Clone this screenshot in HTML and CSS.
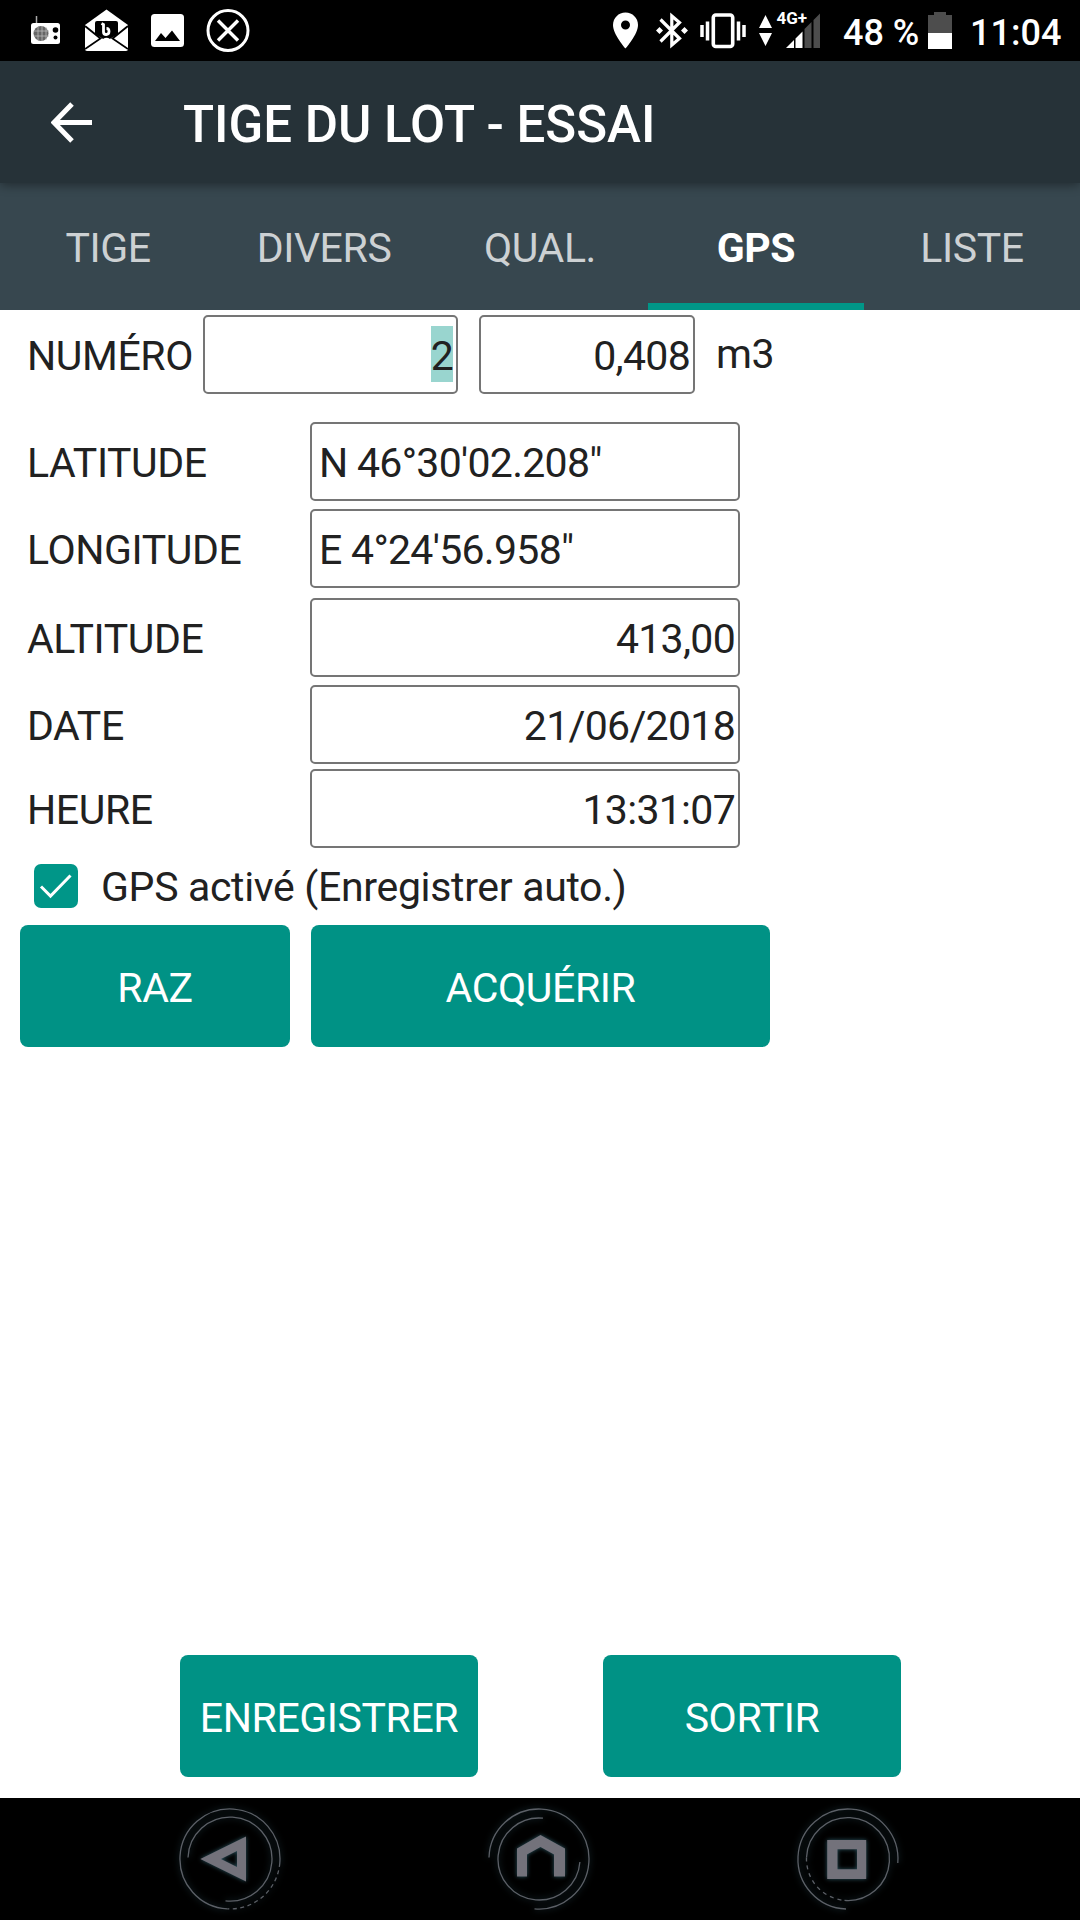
FILE: index.html
```html
<!DOCTYPE html>
<html lang="fr">
<head>
  <meta charset="UTF-8">
  <title>TIGE DU LOT - ESSAI</title>
  <link rel="stylesheet" href="styles.css">
</head>
<body>

  <div class="status">
    <svg class="radio" width="30" height="61" viewBox="0 0 30 61">
      <path d="M5.500 16v8" stroke="#aaa" stroke-width="1.500"/>
      <rect y="23" width="29" height="21" rx="2.500" fill="#fff"/>
      <circle cx="10" cy="33.500" r="7.500" fill="#666"/>
      <path d="M3 31h15M3 36h15M7 27v13M11 26v15M15 27v13" stroke="#bbb" stroke-width="0.8"/>
      <circle cx="24.500" cy="30" r="2.800" fill="#000"/>
      <circle cx="24.500" cy="37.500" r="2" fill="#000"/>
    </svg>
    <svg class="mail" width="43" height="61" viewBox="0 0 43 61">
      <path d="M0 25L21.500 9.500 43 25V49q0 2-2 2H2q-2 0-2-2z" fill="#fff"/>
      <path d="M10 34V23q0-2 2-2h19q2 0 2 2v11L21.500 41z" fill="#000"/>
      <path d="M0 26L15.500 38.500 0 49M43 26L27.500 38.500 43 49" fill="none" stroke="#000" stroke-width="1.800"/>
      <path d="M2 50L18 39q3.500-2.500 7 0L41 50z" fill="#fff"/>
      <path d="M16.500 23.500l2 1v7.500q0 2.500 2.700 2.500t2.800-3-2.500-3" fill="none" stroke="#fff" stroke-width="2.800"/>
    </svg>
    <svg class="image" width="33" height="61" viewBox="0 0 33 61">
      <rect y="14" width="33" height="33" rx="3.500" fill="#fff"/>
      <path d="M4 41l6-8 4.500 5L21 30.500 29 41z" fill="#000"/>
    </svg>
    <svg class="close" width="44" height="61" viewBox="0 0 44 61">
      <g fill="none" stroke="#fff" stroke-width="3">
        <circle cx="22" cy="30.500" r="20"/>
        <path d="M12 20.500l20 20M32 20.500l-20 20" stroke-width="3.400"/>
      </g>
    </svg>

    <svg class="pin" width="25" height="61" viewBox="0 0 25 61">
      <path fill-rule="evenodd" d="M12.500 12.500C5.500 12.500 0 18 0 25c0 9.500 12.500 23.500 12.500 23.500S25 34.500 25 25c0-7-5.500-12.500-12.500-12.500zm0 8a4.500 4.500 0 1 1 0 9 4.500 4.500 0 0 1 0-9z" fill="#fff"/>
    </svg>
    <svg class="bluetooth" width="32" height="61" viewBox="0 0 32 61">
      <path d="M4.500 19.500L23.500 38.500 15.800 45V16l7.700 6.500L4.500 41.500" fill="none" stroke="#fff" stroke-width="3.200"/>
      <path d="M3.500 27l3.500 3.500L3.500 34 0 30.500zM28.500 27l3.500 3.500-3.500 3.500-3.500-3.500z" fill="#fff"/>
    </svg>
    <svg class="vibrate" width="46" height="61" viewBox="0 0 46 61">
      <rect x="13.300" y="15" width="19.400" height="31.500" rx="2.500" fill="none" stroke="#fff" stroke-width="3.600"/>
      <path d="M2 25v12M7.500 21.500v19M38.500 21.500v19M44 25v12" stroke="#fff" stroke-width="3.500"/>
    </svg>
    <svg class="signal" width="62" height="61" viewBox="0 0 62 61">
      <path d="M6.500 15L13 28H0zM0 33h13L6.500 46z" fill="#fff"/>
      <path d="M27 48l8-8v8zM36.500 38.500l7-7V48h-7z" fill="#fff"/>
      <path d="M45.500 29l7-7v26h-7zM54.500 20l6.500-6.500V48h-6.500z" fill="#4d4d4d"/>
      <text x="17.500" y="24" class="network">4G+</text>
    </svg>
    <span class="percent">48 %</span>
    <svg class="battery" width="24" height="61" viewBox="0 0 24 61">
      <path d="M0 33V15h6v-3h12v3h6v18z" fill="#4d4d4d"/>
      <rect y="33" width="24" height="16" fill="#fff"/>
    </svg>
    <span class="clock">11:04</span>
  </div>

  <header>
    <svg width="42" height="42" viewBox="0 0 42 42">
      <path d="M21 3L3 21.500 21 40M3 21.500h38" fill="none" stroke="#fff" stroke-width="5"/>
    </svg>
    <h1>TIGE DU LOT - ESSAI</h1>
  </header>

  <nav class="tabs">
    <a>TIGE</a>
    <a>DIVERS</a>
    <a>QUAL.</a>
    <a class="active">GPS</a>
    <a>LISTE</a>
  </nav>

  <main>
    <div class="row numero">
      <label>NUMÉRO</label>
      <div class="field right"><span class="selected">2</span></div>
      <div class="field right volume">0,408</div>
      <span class="unit">m3</span>
    </div>
    <div class="row latitude">
      <label>LATITUDE</label>
      <div class="field">N 46°30'02.208"</div>
    </div>
    <div class="row longitude">
      <label>LONGITUDE</label>
      <div class="field">E 4°24'56.958"</div>
    </div>
    <div class="row altitude">
      <label>ALTITUDE</label>
      <div class="field right">413,00</div>
    </div>
    <div class="row date">
      <label>DATE</label>
      <div class="field right">21/06/2018</div>
    </div>
    <div class="row heure">
      <label>HEURE</label>
      <div class="field right">13:31:07</div>
    </div>

    <div class="check">
      <svg width="44" height="44" viewBox="0 0 44 44">
        <rect width="44" height="44" rx="7" fill="#009688"/>
        <path d="M7 22.500l9.500 9.500L36.500 11.500" fill="none" stroke="#fff" stroke-width="3"/>
      </svg>
      <span>GPS activé (Enregistrer auto.)</span>
    </div>

    <div class="actions">
      <button class="raz">RAZ</button>
      <button class="acquerir">ACQUÉRIR</button>
    </div>

    <div class="bottom">
      <button>ENREGISTRER</button>
      <button>SORTIR</button>
    </div>
  </main>

  <footer>
    <svg width="120" height="122" viewBox="-60 -61 120 122">
      <g class="ring">
        <path d="M49.800 4A50 50 0 1 0 -2.600 49.900"/>
        <path d="M49.800 4A50 50 0 0 1 -2.600 49.900" stroke-dasharray="4 3.500"/>
        <path d="M-42 -1.500A42 42 0 1 1 -4.500 41.800"/>
      </g>
      <path class="glyph" fill-rule="evenodd" d="M-29.700 0L16-22.500v45zM-9 0L7 8V-8z"/>
    </svg>
    <svg width="120" height="122" viewBox="-60 -61 120 122">
      <g class="ring">
        <path d="M-50 -1.500A50 50 0 1 1 -4.500 49.800"/>
        <path d="M4 -40.800A41 41 0 1 0 40.900 3"/>
      </g>
      <path class="glyph" d="M-22 17.500v-28L1.500-24 26-10.500v28H15v-22L1.500-12-12-4.500v22z"/>
    </svg>
    <svg width="120" height="122" viewBox="-60 -61 120 122">
      <g class="ring">
        <path d="M49.800 4A50 50 0 1 0 -2 50"/>
        <path d="M-41.500 -1.500A41.500 41.500 0 1 1 -3.500 41.400"/>
        <path d="M-41.500 -1.500A41.500 41.500 0 0 0 -3.500 41.400" stroke-dasharray="4 4"/>
      </g>
      <path class="glyph" fill-rule="evenodd" d="M-20.800-19h39v39h-39zM-10.500-9.700v20H9v-20z"/>
    </svg>
  </footer>

</body>
</html>
```

FILE: styles.css
```css
* {
  box-sizing: border-box;
}
body {
  margin: 0;
  width: 1080px;
  height: 1920px;
  display: flex;
  flex-direction: column;
  background: #fff;
  color: #212121;
  font-family: Roboto, sans-serif;
  font-size: 41px;
  letter-spacing: -0.4px;
  line-height: 50px;
}
svg {
  display: block;
  flex: none;
}

/* status bar */
.status {
  height: 61px;
  flex: none;
  display: flex;
  align-items: center;
  padding-left: 31px;
  background: #000;
  color: #fff;
  font-size: 36px;
  font-weight: 500;
  letter-spacing: 0;
  white-space: nowrap;
}
.mail {
  margin-left: 24px;
}
.image {
  margin-left: 23px;
}
.close {
  margin-left: 22px;
}
.pin {
  margin-left: 363px;
}
.bluetooth {
  margin-left: 18px;
}
.vibrate {
  margin-left: 12px;
}
.signal {
  margin-left: 13px;
}
.network {
  fill: #fff;
  font-size: 17px;
  font-weight: 700;
}
.percent {
  width: 85px;
  margin-left: 22px;
  padding-top: 4px;
}
.clock {
  margin-left: 18px;
  padding-top: 4px;
}

header {
  height: 122px;
  flex: none;
  display: flex;
  align-items: center;
  padding-left: 51px;
  background: #263238;
  color: #fff;
  box-shadow: 0 2px 10px rgba(0, 0, 0, 0.4);
  z-index: 1;
}
h1 {
  margin: 0;
  padding-top: 6px;
  padding-left: 90px;
  font-size: 51px;
  font-weight: 500;
  letter-spacing: 0;
}

.tabs {
  height: 127px;
  flex: none;
  display: flex;
  background: #37474f;
  color: #cdd1d3;
}
.tabs a {
  flex: 1;
  padding-top: 40px;
  text-align: center;
}
.tabs .active {
  color: #fff;
  font-weight: 700;
  border-bottom: 7px solid #009688;
}

/* form */
main {
  flex: 1;
  display: flex;
  flex-direction: column;
  padding-top: 5px;
}
.row {
  height: 79px;
  flex: none;
  display: flex;
  line-height: 79px;
  padding-left: 27px;
}
.row label {
  width: 283px;
  padding-top: 2px;
}
.field {
  width: 430px;
  border: 2px solid #757575;
  border-radius: 5px;
  padding: 0 7px;
  line-height: 79px;
  letter-spacing: -0.7px;
}
.right {
  padding-right: 3px;
  text-align: right;
}
.numero label {
  width: 176px;
}
.numero .field {
  width: 255px;
}
.numero .volume {
  width: 216px;
  margin-left: 21px;
}
.selected {
  display: inline-block;
  height: 56px;
  line-height: 60px;
  background: #99d5cf;
}
.unit {
  margin-left: 21px;
  line-height: 79px;
}
.latitude {
  margin-top: 28px;
}
.longitude {
  margin-top: 8px;
}
.altitude {
  margin-top: 10px;
}
.date {
  margin-top: 8px;
}
.heure {
  margin-top: 5px;
}
.check {
  display: flex;
  align-items: center;
  height: 77px;
  padding: 0 0 2px 34px;
}
.check span {
  margin-left: 23px;
  padding-top: 2px;
  letter-spacing: -0.33px;
}
button {
  height: 122px;
  border: none;
  border-radius: 8px;
  padding: 3px 0 0;
  background: #009285;
  color: #fff;
  font: inherit;
  letter-spacing: inherit;
}
.actions {
  display: flex;
  gap: 21px;
  padding-left: 20px;
}
.raz {
  width: 270px;
}
.acquerir {
  width: 459px;
}
.bottom {
  display: flex;
  gap: 125px;
  margin-top: auto;
  padding: 0 0 21px 180px;
}
.bottom button {
  width: 298px;
}

/* system navigation */
footer {
  height: 122px;
  flex: none;
  display: flex;
  gap: 189px;
  padding-left: 170px;
  background: #000;
}
.ring {
  fill: none;
  stroke: #5c6067;
  stroke-width: 1.3;
  filter: drop-shadow(0 0 3px #24424c);
}
.glyph {
  fill: #73727b;
  filter: drop-shadow(0 0 2px #2c5561);
}
```
